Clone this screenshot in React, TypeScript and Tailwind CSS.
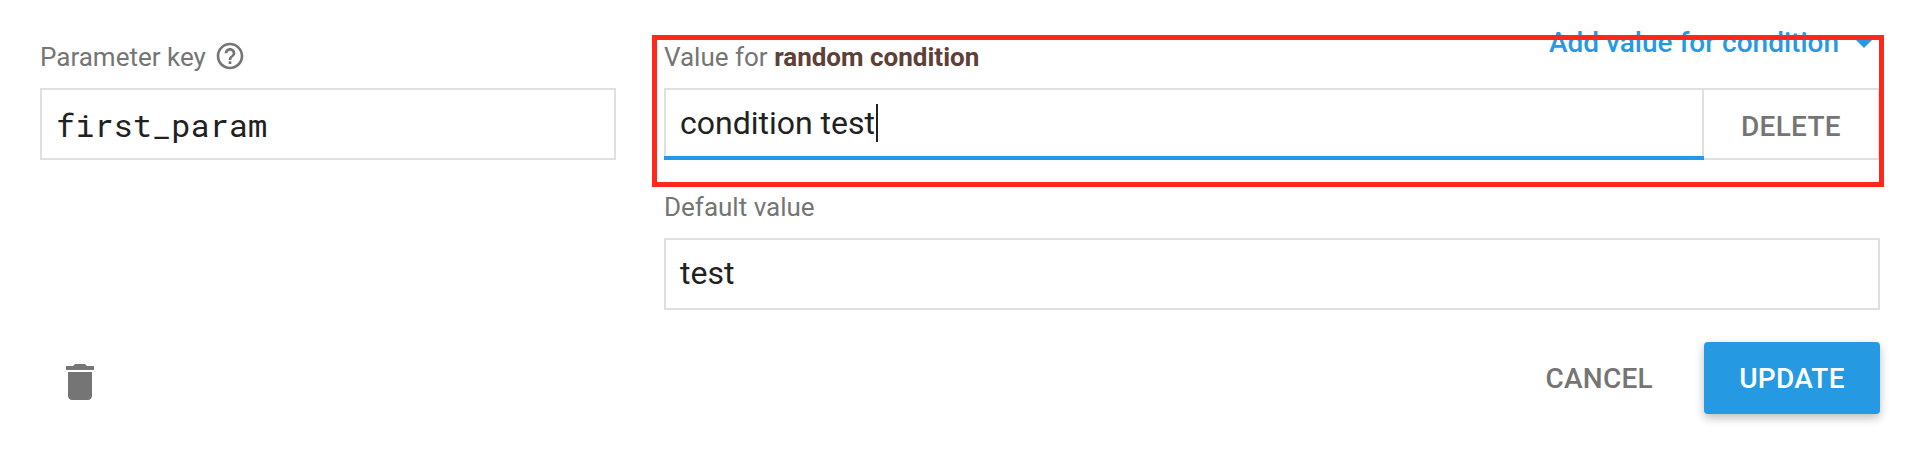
import React from "react";

function HelpIcon() {
  return (
    <svg viewBox="0 0 24 24" className="ml-2 size-8 shrink-0 fill-[#757575]">
      <path d="M11 18h2v-2h-2v2zm1-16C6.48 2 2 6.48 2 12s4.48 10 10 10 10-4.48 10-10S17.52 2 12 2zm0 18c-4.41 0-8-3.59-8-8s3.59-8 8-8 8 3.59 8 8-3.59 8-8 8zm0-14c-2.21 0-4 1.79-4 4h2c0-1.1.9-2 2-2s2 .9 2 2c0 2-3 1.75-3 5h2c0-2.25 3-2.5 3-5 0-2.21-1.79-4-4-4z" />
    </svg>
  );
}

function TrashIcon() {
  return (
    <svg viewBox="0 0 24 24" className="size-12 fill-[#757575]">
      <path d="M6 19c0 1.1.9 2 2 2h8c1.1 0 2-.9 2-2V7H6v12zM19 4h-3.5l-1-1h-5l-1 1H5v2h14V4z" />
    </svg>
  );
}

function DropDownIcon() {
  return (
    <svg viewBox="0 0 24 24" className="size-12 fill-[#2699e3]">
      <path d="M7 10l5 5 5-5z" />
    </svg>
  );
}

export default function App() {
  return (
    <div className="flex h-[464px] w-[1916px] flex-col overflow-hidden bg-white pr-9 pl-10 font-['Roboto','Liberation_Sans',sans-serif] text-[#212121]">
      <div className="flex gap-12">
        <section className="w-[576px]">
          <div className="flex h-[88px] items-center pt-6 text-[26px] leading-8 text-[#757575]">
            <span className="pt-0.5">Parameter key</span>
            <HelpIcon />
          </div>
          <div className="flex h-[72px] items-center border-2 border-[#e0e0e0] px-3.5 pt-0.5 font-['Roboto_Mono','DejaVu_Sans_Mono',monospace] text-[32px] leading-10">
            first_param
          </div>
        </section>

        <section className="relative w-[1216px]">
          <div className="flex h-[88px] items-start justify-between">
            <div className="pt-[41px] text-[26px] leading-8 text-[#757575]">
              Value for <span className="font-bold text-[#5d4037]">random condition</span>
            </div>
            <button className="flex items-center pt-[18px] text-[28px] font-medium text-[#2699e3]">
              <span className="pt-0.5">Add value for condition</span>
              <span className="-mr-2 ml-px">
                <DropDownIcon />
              </span>
            </button>
          </div>
          <div className="flex h-[72px]">
            <div className="flex w-[1040px] flex-col">
              <div className="flex grow items-center border-2 border-b-0 border-[#e0e0e0] px-3.5 text-[32px]">
                <span className="leading-10">condition test</span>
                <span className="ml-px h-[38px] w-0.5 bg-[#212121]" />
              </div>
              <div className="h-1 bg-[#2699e3]" />
            </div>
            <button className="flex w-44 items-center justify-center border-2 border-l-0 border-[#e0e0e0] pt-1.5 text-[28px] font-medium tracking-[0.01em] text-[#757575]">
              DELETE
            </button>
          </div>
          <div className="flex h-[78px] items-end pb-[15px] text-[26px] leading-8 text-[#757575]">
            Default value
          </div>
          <div className="flex h-[72px] items-center border-2 border-[#e0e0e0] px-3.5 pb-0.5 text-[32px] leading-10">
            test
          </div>
          <div className="pointer-events-none absolute top-[35px] -left-3 h-[152px] w-[1232px] border-[5px] border-[#ff281c]" />
        </section>
      </div>

      <div className="mt-8 flex h-[72px] items-center">
        <button className="ml-4 pt-2">
          <TrashIcon />
        </button>
        <button className="mr-[51px] ml-auto pt-0.5 text-[28px] font-medium tracking-[0.01em] text-[#757575]">
          CANCEL
        </button>
        <button className="h-[72px] w-44 rounded bg-[#2699e3] pt-0.5 text-[28px] font-medium tracking-[0.01em] text-white shadow-[0_4px_10px_rgba(0,0,0,0.26)]">
          UPDATE
        </button>
      </div>
    </div>
  );
}
